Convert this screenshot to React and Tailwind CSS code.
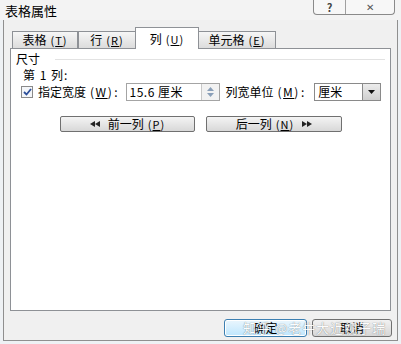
import React from 'react'

const font = { fontFamily: '"Noto Sans CJK SC", "Liberation Sans", sans-serif' }

function Key({ k, big }) {
  return (
    <span className={(big ? 'text-[12px] tracking-[1.5px]' : 'text-[11px] tracking-[1px]')}>(<span className="underline">{k}</span>)</span>
  )
}

function Tab({ label, k, w, active }) {
  return (
    <div
      className={
        'flex items-center justify-center border border-b-0 border-[#8e9196] text-[12px] text-black ' +
        (active
          ? 'h-[22px] bg-white -mb-px relative z-10 -mx-px'
          : 'h-[17px] bg-gradient-to-b from-[#f6f6f6] to-[#dcdcdc]')
      }
      style={{ width: w }}
    >
      <span>{label}</span>
      <span className="ml-[4px]"><Key k={k} /></span>
    </div>
  )
}

function Tri({ dir }) {
  const d = dir === 'left' ? 'M5 0 L0 3 L5 6 Z' : 'M0 0 L5 3 L0 6 Z'
  return (
    <svg width="5" height="6" viewBox="0 0 5 6">
      <path d={d} fill="#222" />
    </svg>
  )
}

function NavButton({ children, w }) {
  return (
    <div
      className="h-[16px] flex items-center justify-center gap-[4px] border border-[#707070] rounded-[2px] bg-gradient-to-b from-[#f4f4f4] to-[#d8d8d8] text-[12px]"
      style={{ width: w }}
    >
      {children}
    </div>
  )
}

export default function App() {
  return (
    <div className="w-[401px] h-[344px] bg-[#eef1f4] relative overflow-hidden" style={font}>
      {/* title bar */}
      <div className="h-[20px] flex items-start justify-between bg-[#f3f3f3]">
        <div className="pl-[5px] pt-[1px] text-[13px] text-black">表格属性</div>
        <div className="mr-[6px] flex h-[15px] border border-t-0 border-[#8a8a8a] rounded-b-[4px] bg-[#f7f7f7] leading-none">
          <div className="w-[32px] flex items-center justify-center border-r border-[#a0a0a0] text-[11px] leading-none text-[#444] font-bold">?</div>
          <div className="w-[48px] flex items-center justify-center text-[10px] leading-none text-[#555]">✕</div>
        </div>
      </div>

      {/* window body */}
      <div className="mx-[3px] h-[321px] border border-t-0 border-[#8f8f8f] bg-[#f0f0f0] flex flex-col">
        <div className="pt-[7px] pl-[8px] flex items-end">
          <Tab label="表格" k="T" w={66} />
          <Tab label="行" k="R" w={58} />
          <Tab label="列" k="U" w={64} active />
          <Tab label="单元格" k="E" w={78} />
        </div>

        <div className="mx-[6px] h-[263px] border border-[#8e9196] bg-white flex flex-col px-[5px] pt-[3px] text-[12px] text-black">
          <div className="flex items-center h-[14px]">
            <span>尺寸</span>
            <div className="flex-1 ml-[15px] h-px bg-[#e2e2e2]" />
          </div>
          <div className="mt-[2px] ml-[7px] h-[14px] flex items-center tracking-[1px]">第 1 列:</div>

          <div className="mt-[1px] ml-[5px] flex items-center h-[18px]">
            <div className="w-[12px] h-[12px] border border-[#8a8a8a] bg-[#f4f6f9] flex items-center justify-center">
              <svg width="9" height="8" viewBox="0 0 9 8">
                <path d="M1 4 L3.5 6.5 L8 1" stroke="#2d4f9a" strokeWidth="1.8" fill="none" />
              </svg>
            </div>
            <span className="ml-[5px]">指定宽度</span>
            <span className="ml-[4px]"><Key k="W" big /></span>
            <span className="ml-[1px]">:</span>
            <div className="ml-[8px] flex h-[18px] border border-[#a4a4a4]">
              <div className="w-[74px] flex items-center pl-[3px] tracking-[0.5px]">15.6 厘米</div>
              <div className="w-[18px] flex flex-col items-center justify-center gap-[2px] border-l border-[#c8c8c8] bg-[#f2f2f2]">
                <svg width="7" height="4" viewBox="0 0 7 4"><path d="M0 4 L3.5 0 L7 4 Z" fill="#8a9fb8" /></svg>
                <svg width="7" height="4" viewBox="0 0 7 4"><path d="M0 0 L3.5 4 L7 0 Z" fill="#8a9fb8" /></svg>
              </div>
            </div>
            <span className="ml-[6px]">列宽单位</span>
            <span className="ml-[4px]"><Key k="M" big /></span>
            <span className="ml-[1px]">:</span>
            <div className="ml-[10px] flex h-[18px] border border-[#8a8a8a]">
              <div className="w-[47px] flex items-center pl-[3px]">厘米</div>
              <div className="w-[18px] flex items-center justify-center border-l border-[#8a8a8a] bg-gradient-to-b from-[#ececec] to-[#cfcfcf]">
                <svg width="7" height="4" viewBox="0 0 7 4"><path d="M0 0 L3.5 4 L7 0 Z" fill="#111" /></svg>
              </div>
            </div>
          </div>

          <div className="mt-[15px] flex gap-[11px] pl-[44px]">
            <NavButton w={135}>
              <span className="flex"><Tri dir="left" /><Tri dir="left" /></span>
              <span className="ml-[4px]">前一列</span>
              <Key k="P" />
            </NavButton>
            <NavButton w={136}>
              <span>后一列</span>
              <Key k="N" />
              <span className="flex ml-[4px]"><Tri dir="right" /><Tri dir="right" /></span>
            </NavButton>
          </div>
        </div>

        <div className="flex justify-end pr-[5px] pt-[8px] gap-[5px]">
          <div className="w-[83px] h-[18px] border border-[#3c7fb1] rounded-[3px] bg-gradient-to-b from-[#eaf6fd] to-[#bee6fd] flex items-center justify-center text-[12px] shadow-[inset_0_0_0_1px_#ffffff]">确定</div>
          <div className="w-[80px] h-[18px] border border-[#707070] rounded-[3px] bg-gradient-to-b from-[#f2f2f2] to-[#d6d6d6] flex items-center justify-center text-[12px]">取消</div>
        </div>
      </div>

      {/* watermark */}
      <div className="absolute left-[243px] top-[318px] text-[13px] text-white tracking-[1px] opacity-90 [text-shadow:0_0_1px_#555]">
        知乎 @老牛大近视子瑞
      </div>
    </div>
  )
}
